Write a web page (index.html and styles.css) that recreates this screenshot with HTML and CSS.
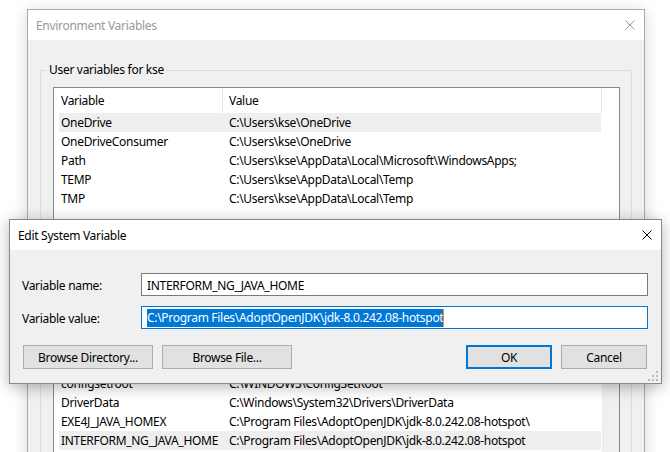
FILE: index.html
```html
<!DOCTYPE html>
<html lang="en">
<head>
<meta charset="utf-8">
<title>Environment Variables</title>
<link rel="stylesheet" href="styles.css">
</head>
<body>
<div class="desktop">
  <section class="window env">
    <header class="titlebar">
      <span class="title">Environment Variables</span>
      <svg class="close" width="10" height="10" viewBox="0 0 10 10"><path d="M0.5 0.5L9.5 9.5M9.5 0.5L0.5 9.5"/></svg>
    </header>
    <div class="env-body">
      <fieldset class="group user">
        <legend>User variables for kse</legend>
        <div class="list user-list">
          <div class="list-main">
            <div class="list-head"><span class="hcell c1">Variable</span><span class="hcell c2">Value</span></div>
            <div class="row sel"><span class="cell c1">OneDrive</span><span class="cell c2">C:\Users\kse\OneDrive</span></div>
            <div class="row"><span class="cell c1">OneDriveConsumer</span><span class="cell c2">C:\Users\kse\OneDrive</span></div>
            <div class="row"><span class="cell c1">Path</span><span class="cell c2">C:\Users\kse\AppData\Local\Microsoft\WindowsApps;</span></div>
            <div class="row"><span class="cell c1">TEMP</span><span class="cell c2">C:\Users\kse\AppData\Local\Temp</span></div>
            <div class="row"><span class="cell c1">TMP</span><span class="cell c2">C:\Users\kse\AppData\Local\Temp</span></div>
          </div>
        </div>
      </fieldset>
      <fieldset class="group sys">
        <div class="list sys-list">
          <div class="list-main">
            <div class="row"><span class="cell c1">configsetroot</span><span class="cell c2">C:\WINDOWS\ConfigSetRoot</span></div>
            <div class="row"><span class="cell c1">DriverData</span><span class="cell c2">C:\Windows\System32\Drivers\DriverData</span></div>
            <div class="row"><span class="cell c1">EXE4J_JAVA_HOMEX</span><span class="cell c2">C:\Program Files\AdoptOpenJDK\jdk-8.0.242.08-hotspot\</span></div>
            <div class="row sel"><span class="cell c1">INTERFORM_NG_JAVA_HOME</span><span class="cell c2">C:\Program Files\AdoptOpenJDK\jdk-8.0.242.08-hotspot</span></div>
          </div>
          <div class="vscroll"></div>
        </div>
      </fieldset>
    </div>
  </section>

  <section class="window dialog">
    <header class="titlebar">
      <span class="title">Edit System Variable</span>
      <svg class="close" width="10" height="10" viewBox="0 0 10 10"><path d="M0.5 0.5L9.5 9.5M9.5 0.5L0.5 9.5"/></svg>
    </header>
    <div class="dialog-body">
      <div class="field">
        <span class="label">Variable name:</span>
        <div class="input">INTERFORM_NG_JAVA_HOME</div>
      </div>
      <div class="field">
        <span class="label">Variable value:</span>
        <div class="input focus"><span class="selection">C:\Program Files\AdoptOpenJDK\jdk-8.0.242.08-hotspot</span><span class="caret"></span></div>
      </div>
      <div class="button-row">
        <div class="btn-group left">
          <button class="btn wide">Browse Directory...</button>
          <button class="btn wide">Browse File...</button>
        </div>
        <div class="btn-group right">
          <button class="btn default">OK</button>
          <button class="btn">Cancel</button>
        </div>
      </div>
    </div>
    <svg class="grip" width="11" height="11" viewBox="0 0 11 11">
      <rect x="8" y="0" width="2" height="2"/>
      <rect x="4" y="4" width="2" height="2"/>
      <rect x="8" y="4" width="2" height="2"/>
      <rect x="0" y="8" width="2" height="2"/>
      <rect x="4" y="8" width="2" height="2"/>
      <rect x="8" y="8" width="2" height="2"/>
    </svg>
  </section>
</div>
</body>
</html>
```

FILE: styles.css
```css
* { box-sizing: border-box; }

html, body {
  margin: 0;
  padding: 0;
}

body {
  width: 670px;
  height: 452px;
  overflow: hidden;
  background: #ffffff;
  font-family: "Noto Sans", "Open Sans", sans-serif;
  font-size: 12px;
  letter-spacing: -0.3px;
  color: #000;
}

.desktop {
  position: relative;
  width: 670px;
  height: 452px;
  overflow: hidden;
}

.window {
  position: absolute;
  display: flex;
  flex-direction: column;
  background: #f0f0f0;
}

.env {
  left: 27px;
  top: 9px;
  width: 618px;
  height: 520px;
  border: 1px solid #aaaaaa;
  box-shadow: 0 2px 14px rgba(0, 0, 0, 0.16);
}

.dialog {
  left: 9px;
  top: 219px;
  width: 653px;
  height: 165px;
  border: 1px solid #888888;
  box-shadow: 0 3px 14px rgba(0, 0, 0, 0.3);
}

.titlebar {
  flex: none;
  height: 30px;
  background: #ffffff;
  display: flex;
  align-items: center;
  justify-content: space-between;
  padding: 0 9px 0 8px;
  line-height: 16px;
}

.title { padding-top: 1px; }

.env .title { color: #999999; }

.close {
  fill: none;
  stroke: #000;
  stroke-width: 1;
}

.env .close { stroke: #9a9a9a; }

/* Environment window body */
.env-body {
  padding: 22px 12px 0 12px;
}

.group {
  margin: 0;
  min-width: 0;
  border: 1px solid #dcdcdc;
  padding: 9px 11px 12px 12px;
}

.group.user { padding-bottom: 44px; }

.group.sys {
  margin-top: 30px;
  padding-top: 60px;
}

.group legend {
  padding: 0 2px;
  margin-left: -6px;
  line-height: 16px;
}

.list {
  border: 1px solid #828790;
  background: #fff;
  display: flex;
}

.user-list { height: 150px; }
.sys-list { height: 160px; }

.list-main {
  width: 548px;
  flex: none;
}

.vscroll {
  flex: 1;
  background: #f0f0f0;
}

.list-head {
  display: flex;
  height: 25px;
  line-height: 25px;
}

.hcell {
  border-right: 1px solid #e5e5e5;
  white-space: nowrap;
}

.hcell.c1 { width: 169px; padding-left: 7px; }
.hcell.c2 { width: 379px; padding-left: 6px; }

.row {
  display: flex;
  margin-left: 5px;
  width: 542px;
  height: 19px;
  line-height: 20px;
  white-space: nowrap;
}

.row.sel { background: #eeeeee; }

.cell.c1 { width: 164px; padding-left: 2px; flex: none; }
.cell.c2 { padding-left: 6px; }

/* Dialog */
.dialog-body {
  flex: 1;
  display: flex;
  flex-direction: column;
  padding: 23px 13px 14px 12px;
}

.field {
  display: grid;
  grid-template-columns: 119px 1fr;
  align-items: center;
}

.field + .field { margin-top: 10px; }

.label { padding-top: 1px; }

.input {
  height: 23px;
  border: 1px solid #7a7a7a;
  background: #fff;
  padding-left: 5px;
  padding-top: 1px;
  display: flex;
  align-items: center;
  white-space: nowrap;
  overflow: hidden;
}

.input.focus { border-color: #0078d7; }

.selection {
  background: #0078d7;
  color: #fff;
  line-height: 18px;
}

.caret {
  width: 1px;
  height: 18px;
  background: #ff8728;
}

.button-row {
  display: flex;
  justify-content: space-between;
  margin-top: 16px;
}

.btn-group {
  display: flex;
  gap: 9px;
}

.btn-group.left { margin-left: 1px; }
.btn-group.right { margin-right: 1px; }

.btn {
  height: 24px;
  width: 86px;
  padding: 1px 0 0;
  margin: 0;
  font: inherit;
  letter-spacing: inherit;
  color: #000;
  background: #e1e1e1;
  border: 1px solid #adadad;
  line-height: 20px;
}

.btn.wide { width: 130px; }
.btn.default { border: 2px solid #0078d7; }

.grip {
  position: absolute;
  right: 2px;
  bottom: 1px;
  fill: #b9b9b9;
}
```
